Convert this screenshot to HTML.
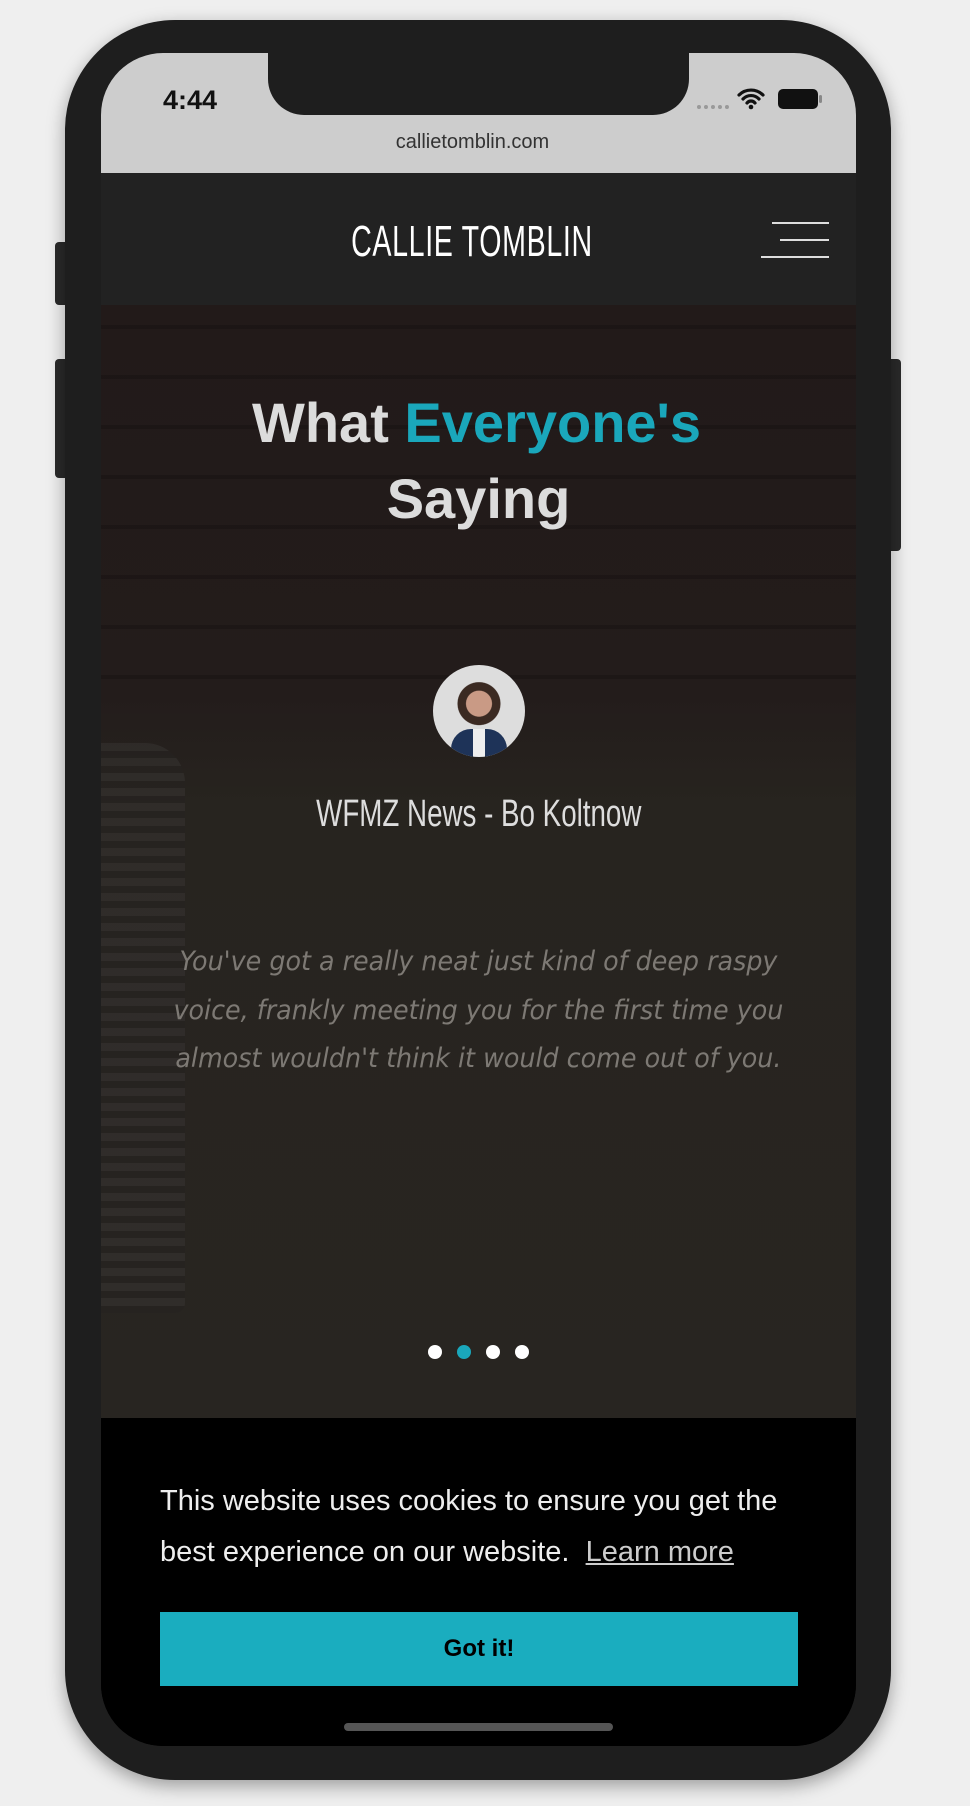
<!DOCTYPE html>
<html><head><meta charset="utf-8"><style>
*{margin:0;padding:0;box-sizing:border-box}
body{width:970px;height:1806px;background:#efefef;position:relative;overflow:hidden;font-family:"Liberation Sans",sans-serif}
.abs{position:absolute}
.phone{left:65px;top:20px;width:826px;height:1760px;background:#1e1e1e;border-radius:110px;box-shadow:0 6px 18px rgba(0,0,0,.35)}
.screen{left:101px;top:53px;width:755px;height:1693px;border-radius:62px;overflow:hidden;background:#000}
.c{text-align:center;left:0;width:755px;white-space:nowrap}
.cond{display:inline-block;transform:scaleX(.65);transform-origin:center}
</style></head><body>
<div class="abs" style="left:55px;top:242px;width:14px;height:63px;background:#2a2a2a;border-radius:4px"></div>
<div class="abs" style="left:55px;top:359px;width:14px;height:119px;background:#2a2a2a;border-radius:4px"></div>
<div class="abs" style="left:887px;top:359px;width:14px;height:192px;background:#2a2a2a;border-radius:4px"></div>
<div class="abs phone"></div>
<div class="abs screen">
  <div class="abs" style="left:0;top:0;width:755px;height:120px;background:#cdcdcd"></div>
  <div class="abs" style="left:167px;top:-10px;width:421px;height:72px;background:#1e1e1e;border-radius:0 0 36px 36px"></div>
  <div class="abs" style="left:62px;top:32px;font-size:27px;font-weight:bold;color:#111">4:44</div>
  <div class="abs" style="left:596px;top:52px;width:32px;height:4px;border-top:4px dotted #999"></div>
  <svg class="abs" style="left:636px;top:33px" width="28" height="24" viewBox="0 0 28 24"><path d="M2 9a17 17 0 0 1 24 0M6 13a11 11 0 0 1 16 0M10 17a5 5 0 0 1 8 0" stroke="#111" stroke-width="3.2" fill="none" stroke-linecap="round"/><circle cx="14" cy="21" r="2.3" fill="#111"/></svg>
  <div class="abs" style="left:677px;top:36px;width:40px;height:20px;background:#111;border-radius:5px"></div>
  <div class="abs" style="left:718px;top:42px;width:3px;height:8px;background:#888;border-radius:2px"></div>
  <div class="abs c" style="top:78px;font-size:20px;color:#333"><span style="display:inline-block;margin-left:-12px">callietomblin.com</span></div>
  <div class="abs" style="left:0;top:120px;width:755px;height:132px;background:#222"></div>
  <div class="abs c" style="top:164px;font-size:44px;color:#fff;letter-spacing:1px"><span class="cond" style="margin-left:-14px">CALLIE TOMBLIN</span></div>
  <div class="abs" style="left:671px;top:169px;width:57px;height:2px;background:#ddd"></div>
  <div class="abs" style="left:679px;top:186px;width:49px;height:2px;background:#ddd"></div>
  <div class="abs" style="left:660px;top:203px;width:68px;height:2px;background:#ddd"></div>
  <div class="abs" style="left:0;top:252px;width:755px;height:1113px;background:linear-gradient(#221a19 0%,#231c1b 35%,#27241f 45%,#282521 100%)"></div>
  <div class="abs" style="left:0;top:252px;width:755px;height:420px;opacity:.18;background:repeating-linear-gradient(0deg,transparent 0 46px,#000 46px 50px)"></div>
  <div class="abs" style="left:0;top:690px;width:84px;height:570px;border-radius:0 40px 10px 0;background:repeating-linear-gradient(180deg,#353230 0 8px,#252220 8px 15px);opacity:.6"></div>
  <div class="abs c" style="top:332px;font-size:56px;font-weight:bold;color:#dcdcdc;line-height:76px"><span style="margin-left:-4px">What <span style="color:#1aa7bb">Everyone's</span></span><br>Saying</div>
  <div class="abs" style="left:332px;top:612px;width:92px;height:92px;border-radius:50%;background:radial-gradient(circle at 50% 42%,#c99a85 0 18%,#3b2a22 19% 30%,#ddd 31%);overflow:hidden">
    <div class="abs" style="left:18px;top:64px;width:56px;height:30px;background:#1e3358;border-radius:20px 20px 0 0"></div>
    <div class="abs" style="left:40px;top:64px;width:12px;height:30px;background:#eee"></div>
  </div>
  <div class="abs c" style="top:740px;font-size:38px;color:#ddd"><span class="cond" style="transform:scaleX(.73)">WFMZ News - Bo Koltnow</span></div>
  <div class="abs c" style="top:885px;font-size:27px;font-style:italic;color:#7d7974;line-height:48.5px;font-family:'DejaVu Sans',sans-serif"><div style="display:inline-block;transform:scaleX(.94);transform-origin:center">You've got a really neat just kind of deep raspy<br>voice, frankly meeting you for the first time you<br>almost wouldn't think it would come out of you.</div></div>
  <div class="abs" style="left:327px;top:1292px;width:14px;height:14px;border-radius:50%;background:#fff"></div>
  <div class="abs" style="left:356px;top:1292px;width:14px;height:14px;border-radius:50%;background:#1aa7bb"></div>
  <div class="abs" style="left:385px;top:1292px;width:14px;height:14px;border-radius:50%;background:#fff"></div>
  <div class="abs" style="left:414px;top:1292px;width:14px;height:14px;border-radius:50%;background:#fff"></div>
  <div class="abs" style="left:0;top:1365px;width:755px;height:330px;background:#000"></div>
  <div class="abs" style="left:59px;top:1423px;font-size:29px;color:#eee;line-height:51px;white-space:nowrap">This website uses cookies to ensure you get the<br>best experience on our website.&nbsp; <span style="text-decoration:underline;color:#ccc">Learn more</span></div>
  <div class="abs" style="left:59px;top:1559px;width:638px;height:74px;background:#1aadbf;text-align:center;line-height:74px;font-size:24px;font-weight:bold;color:#000">Got it!</div>
  <div class="abs" style="left:243px;top:1670px;width:269px;height:8px;border-radius:4px;background:#555"></div>
</div>
</body></html>
